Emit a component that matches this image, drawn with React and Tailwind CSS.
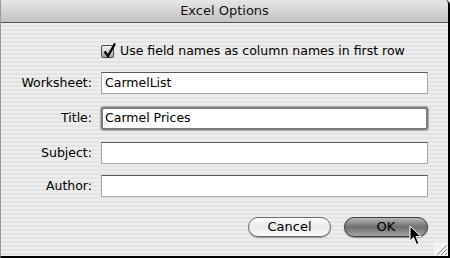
const font = { fontFamily: '"DejaVu Sans", "Liberation Sans", sans-serif' };

function Field({ label, value, focused }) {
  return (
    <div className="flex items-center h-[22px]">
      <div className="w-[92px] text-right pr-[1px] text-[12.5px] text-black">{label}</div>
      <div
        className={
          focused
            ? 'ml-[8px] w-[327px] h-[23px] bg-white border-2 border-[#7b7b7b] rounded-[3px] shadow-[0_0_1px_1px_#a9a9a9] flex items-center pl-[2px] text-[12.5px] text-black'
            : 'ml-[8px] w-[327px] h-[22px] bg-white border border-[#a8a8a8] border-t-[#5a5a5a] flex items-center pl-[3px] text-[12.5px] text-black'
        }
      >
        {value}
      </div>
    </div>
  );
}

export default function App() {
  return (
    <div className="w-[450px] h-[258px] relative flex flex-col bg-[#e9e9e9] border-r-2 border-b-2 border-black border-l border-l-[#9a9a9a] rounded-tr-[5px] overflow-hidden" style={font}>
      {/* title bar */}
      <div className="h-[23px] flex items-center justify-center bg-gradient-to-b from-[#e6e6e6] to-[#c3c3c3] border-b border-[#555] text-[13px] text-[#111]">
        Excel Options
      </div>

      <div className="flex-1 flex flex-col bg-[repeating-linear-gradient(180deg,#ededed_0px,#ededed_2px,#e4e4e4_2px,#e4e4e4_4px)] pt-[20px]">
        {/* checkbox row */}
        <div className="flex items-center h-[16px] pl-[100px]">
          <div className="relative w-[13px] h-[13px] rounded-[2px] border border-[#4a4a4a] bg-gradient-to-b from-[#f4f4f4] to-[#a9a9a9]">
            <svg className="absolute -top-[4px] left-[1px]" width="14" height="16" viewBox="0 0 14 16">
              <path d="M1.5 9.5 L5 14 L12 1.5" fill="none" stroke="#000" strokeWidth="2.4" strokeLinejoin="round" />
            </svg>
          </div>
          <span className="ml-[6px] text-[12.5px] text-black">Use field names as column names in first row</span>
        </div>

        <div className="flex flex-col mt-[13px]">
          <Field label="Worksheet:" value="CarmelList" />
          <div className="mt-[13px]"><Field label="Title:" value="Carmel Prices" focused /></div>
          <div className="mt-[13px]"><Field label="Subject:" value="" /></div>
          <div className="mt-[11px]"><Field label="Author:" value="" /></div>
        </div>

        {/* buttons */}
        <div className="flex justify-end gap-[13px] pr-[20px] mt-[20px]">
          <button className="w-[83px] h-[20px] rounded-full border border-[#6b6b6b] bg-gradient-to-b from-[#ffffff] via-[#eaeaea] to-[#fbfbfb] text-[13px] text-black flex items-center justify-center shadow-[0_1px_1px_#9a9a9a]">
            Cancel
          </button>
          <button className="w-[84px] h-[20px] rounded-full border border-[#3c3c3c] bg-gradient-to-b from-[#b9b9b9] via-[#6f6f6f] to-[#a4a4a4] text-[13px] text-black flex items-center justify-center shadow-[0_1px_1px_#8a8a8a]">
            OK
          </button>
        </div>
      </div>

      {/* mouse pointer */}
      <svg className="absolute left-[408px] top-[225px]" width="14" height="21" viewBox="0 0 14 21">
        <path d="M1 1 L1 16 L4.5 12.5 L7.5 19.5 L10 18.5 L7 11.5 L12 11.5 Z" fill="#000" stroke="#fff" strokeWidth="1" strokeLinejoin="round" />
      </svg>

      {/* resize grip */}
      <svg className="absolute right-0 bottom-0" width="14" height="14" viewBox="0 0 14 14">
        <rect width="14" height="14" fill="#f2f2f2" />
        <path d="M3 13 L13 3 M7 13 L13 7 M11 13 L13 11" stroke="#8a8a8a" strokeWidth="1" />
      </svg>
    </div>
  );
}
